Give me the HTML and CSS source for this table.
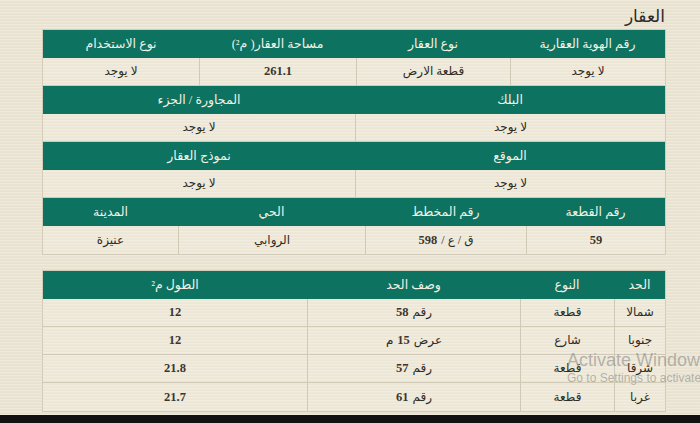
FILE: index.html
```html
<!DOCTYPE html>
<html lang="ar" dir="rtl">
<head>
<meta charset="utf-8">
<title>العقار</title>
<link rel="stylesheet" href="styles.css">
</head>
<body>
<div class="page">
  <h1 class="title">العقار</h1>

  <section class="table table-main">
    <div class="row cols-4 head">
      <div class="cell">رقم الهوية العقارية</div>
      <div class="cell">نوع العقار</div>
      <div class="cell">مساحة العقار( م²)</div>
      <div class="cell">نوع الاستخدام</div>
    </div>
    <div class="row cols-4 data">
      <div class="cell">لا يوجد</div>
      <div class="cell">قطعة الارض</div>
      <div class="cell"><b class="num">261.1</b></div>
      <div class="cell">لا يوجد</div>
    </div>

    <div class="row cols-2 head">
      <div class="cell">البلك</div>
      <div class="cell">المجاورة / الجزء</div>
    </div>
    <div class="row cols-2 data">
      <div class="cell">لا يوجد</div>
      <div class="cell">لا يوجد</div>
    </div>

    <div class="row cols-2 head">
      <div class="cell">الموقع</div>
      <div class="cell">نموذج العقار</div>
    </div>
    <div class="row cols-2 data">
      <div class="cell">لا يوجد</div>
      <div class="cell">لا يوجد</div>
    </div>

    <div class="row cols-loc head">
      <div class="cell">رقم القطعة</div>
      <div class="cell">رقم المخطط</div>
      <div class="cell">الحي</div>
      <div class="cell">المدينة</div>
    </div>
    <div class="row cols-loc data last">
      <div class="cell"><b class="num">59</b></div>
      <div class="cell">ق / ع / <b class="num">598</b></div>
      <div class="cell">الروابي</div>
      <div class="cell">عنيزة</div>
    </div>
  </section>

  <section class="table table-bounds">
    <div class="row cols-b head">
      <div class="cell">الحد</div>
      <div class="cell">النوع</div>
      <div class="cell">وصف الحد</div>
      <div class="cell">الطول م²</div>
    </div>
    <div class="row cols-b data">
      <div class="cell">شمالا</div>
      <div class="cell">قطعة</div>
      <div class="cell">رقم <b class="num">58</b></div>
      <div class="cell"><b class="num">12</b></div>
    </div>
    <div class="row cols-b data">
      <div class="cell">جنوبا</div>
      <div class="cell">شارع</div>
      <div class="cell">عرض <b class="num">15</b> م</div>
      <div class="cell"><b class="num">12</b></div>
    </div>
    <div class="row cols-b data">
      <div class="cell">شرقا</div>
      <div class="cell">قطعة</div>
      <div class="cell">رقم <b class="num">57</b></div>
      <div class="cell"><b class="num">21.8</b></div>
    </div>
    <div class="row cols-b data last">
      <div class="cell">غربا</div>
      <div class="cell">قطعة</div>
      <div class="cell">رقم <b class="num">61</b></div>
      <div class="cell"><b class="num">21.7</b></div>
    </div>
  </section>

  <div class="watermark" dir="ltr">
    <div class="wm-big">Activate Windows</div>
    <div class="wm-small">Go to Settings to activate Windows.</div>
  </div>
</div>
<div class="bottom-bar"></div>
</body>
</html>
```

FILE: styles.css
```css
html, body {
  margin: 0;
  padding: 0;
}
body {
  width: 700px;
  height: 423px;
  overflow: hidden;
  background-color: #ebe5d2;
  background-image: repeating-linear-gradient(180deg, rgba(255,255,255,0.22) 0px, rgba(255,255,255,0.22) 1px, rgba(0,0,0,0.035) 2px, rgba(0,0,0,0) 3px);
  font-family: "Liberation Serif", "DejaVu Sans", serif;
  color: #2e2b25;
  position: relative;
}
.page {
  padding: 0 35px 0 43px;
  position: relative;
}
.title {
  margin: 0;
  height: 30px;
  font-size: 17px;
  font-weight: normal;
  line-height: 34px;
  color: #2a2a2a;
  text-align: right;
}
.table {
  width: 622px;
  background-color: #eee8d7;
  background-image: repeating-linear-gradient(180deg, rgba(255,255,255,0.2) 0px, rgba(255,255,255,0.2) 1px, rgba(0,0,0,0.02) 2px, rgba(0,0,0,0) 3px);
  box-shadow: 0 0 0 1px #d3ccb9;
}
.table-bounds {
  margin-top: 17px;
}
.row {
  display: grid;
  height: 28px;
}
.cols-4 { grid-template-columns: 155px 154px 157px 156px; }
.cols-2 { grid-template-columns: 310px 312px; }
.cols-loc { grid-template-columns: 139px 161px 187px 135px; }
.cols-b { grid-template-columns: 51px 94px 213px 264px; }
.cell {
  display: flex;
  align-items: center;
  justify-content: center;
  gap: 4px;
  font-size: 12px;
  white-space: nowrap;
}
.head {
  background: #0d7260;
  color: #f2f1e6;
}
.head .cell {
  font-size: 12.5px;
}
.data .cell {
  border-bottom: 1px solid #d0c9b6;
  border-left: 1px solid #d0c9b6;
  box-sizing: border-box;
}
.data .cell:last-child {
  border-left: none;
}
.data.last .cell {
  border-bottom: none;
}
.num {
  font-weight: bold;
  font-size: 12.5px;
  color: #3a3630;
}
.watermark {
  position: absolute;
  left: 567px;
  top: 350px;
  color: rgba(120, 120, 120, 0.5);
  font-family: "Liberation Sans", sans-serif;
  white-space: nowrap;
  pointer-events: none;
}
.wm-big {
  font-size: 18px;
  line-height: 20px;
}
.wm-small {
  font-size: 12px;
  line-height: 16px;
}
.bottom-bar {
  position: absolute;
  left: 0;
  right: 0;
  bottom: 0;
  height: 8px;
  background: #111;
}
```
